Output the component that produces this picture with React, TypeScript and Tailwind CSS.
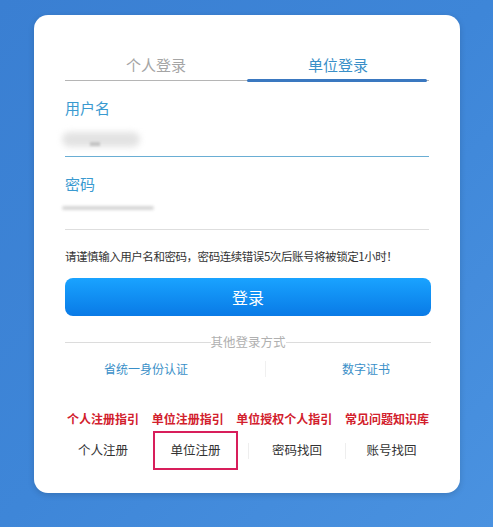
export default function App() {
  const font = { fontFamily: '"Microsoft YaHei", "Noto Sans CJK SC", sans-serif' };
  const guides = ['个人注册指引', '单位注册指引', '单位授权个人指引', '常见问题知识库'];
  return (
    <div
      className="w-[493px] h-[527px] bg-gradient-to-br from-[#3a7fd2] via-[#3e86d8] to-[#4a92e0] pt-[15px] pl-[34px]"
      style={font}
    >
      <div className="w-[426px] h-[478px] bg-white rounded-[14px] shadow-[0_2px_6px_rgba(0,0,0,0.15)] px-[31px] pt-[41px]">
        {/* tabs */}
        <div className="flex h-[25px] border-b border-[#b5b5b5]">
          <div className="flex-1 text-center text-[15px] leading-[18px] text-[#a5a5a5]">个人登录</div>
          <div className="flex-1 text-center text-[15px] leading-[18px] text-[#3a8fc8] relative">
            单位登录
            <div className="absolute left-0 right-[2px] -bottom-[2px] h-[3px] bg-[#3a78c0] rounded-sm" />
          </div>
        </div>

        {/* username */}
        <div className="mt-[17px] text-[15px] leading-[20px] text-[#3a9ad0]">用户名</div>
        <div className="h-[39px] border-b border-[#6aaed4] relative">
          <div className="absolute left-[-3px] top-[14px] w-[78px] h-[15px] rounded-full bg-[#e3e3e3] blur-[3px]" />
          <div className="absolute left-[25px] top-[24px] w-[10px] h-[4px] bg-[#c4c4c4] blur-[1px]" />
        </div>

        {/* password */}
        <div className="mt-[17px] text-[15px] leading-[20px] text-[#3a9ad0]">密码</div>
        <div className="h-[36px] border-b border-[#dedede] relative">
          <div className="absolute left-[-3px] top-[12px] w-[92px] h-[4px] rounded-full bg-[#d6d6d6] blur-[1.5px]" />
        </div>

        <div className="mt-[18px] text-[11.5px] leading-[16px] text-[#333] tracking-[-0.45px]">
          请谨慎输入用户名和密码，密码连续错误5次后账号将被锁定1小时！
        </div>

        <button className="mt-[14px] w-[366px] h-[38px] rounded-[8px] bg-gradient-to-b from-[#1aa3ff] to-[#0a7ae6] text-white text-[16px] block">
          登录
        </button>

        {/* other methods */}
        <div className="mt-[18px] flex items-center w-[366px]">
          <div className="flex-1 h-px bg-[#dcdcdc]" />
          <div className="text-[12.5px] leading-[16px] text-[#b0b0b0]">其他登录方式</div>
          <div className="flex-1 h-px bg-[#dcdcdc]" />
        </div>
        <div className="mt-[10px] flex w-[366px] items-center text-[12px] leading-[18px] text-[#3a8fc8]">
          <div className="w-[162px] shrink-0 text-center">省统一身份认证</div>
          <div className="w-[38px] shrink-0" />
          <div className="w-px h-[16px] shrink-0 bg-[#f0f0f0]" />
          <div className="flex-1 pl-[35px] text-center">数字证书</div>
        </div>

        {/* guides */}
        <div className="mt-[33px] flex justify-between w-[362px] ml-[2px] text-[12px] leading-[16px] font-bold text-[#d2202c]">
          {guides.map((g) => (
            <span key={g}>{g}</span>
          ))}
        </div>

        <div className="mt-[4px] flex items-center w-[366px] text-[12.5px] text-[#333]">
          <div className="w-[88px] pr-[12px] text-center">个人注册</div>
          <div className="w-[85px] h-[39px] border-2 border-[#d81e5b] flex items-center justify-center">
            单位注册
          </div>
          <div className="w-[10px]" />
          <div className="w-px h-[16px] bg-[#eeeeee]" />
          <div className="w-[96px] text-center">密码找回</div>
          <div className="w-px h-[16px] bg-[#eeeeee]" />
          <div className="flex-1 pl-[6px] text-center">账号找回</div>
        </div>
      </div>
    </div>
  );
}
